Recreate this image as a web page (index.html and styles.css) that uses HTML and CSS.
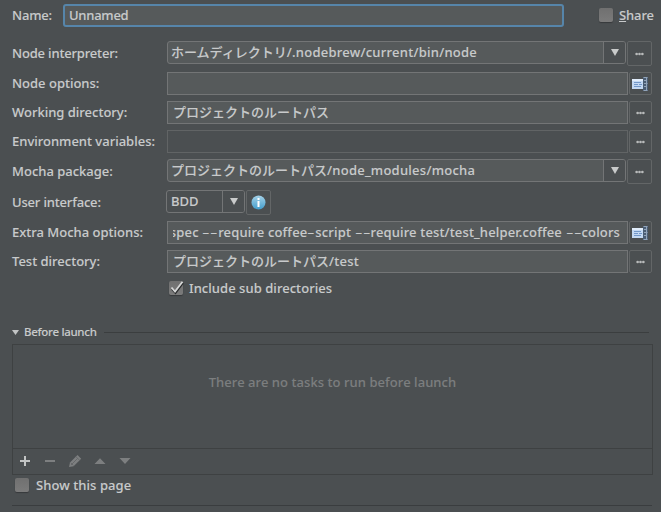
FILE: index.html
```
<!DOCTYPE html>
<html lang="ja">
<head>
<meta charset="utf-8">
<title>Run configuration</title>
<link rel="stylesheet" href="styles.css">
</head>
<body>
<svg class="defs" width="0" height="0">
  <defs>
    <linearGradient id="info" x1="0" y1="0" x2="0" y2="1"><stop offset="0" stop-color="#a5d2e8"/><stop offset="1" stop-color="#429dcc"/></linearGradient>
    <symbol id="dots" viewBox="0 0 10 4"><g fill="#b9bbbc"><circle cx="1.8" cy="2" r="1.45"/><circle cx="5" cy="2" r="1.45"/><circle cx="8.2" cy="2" r="1.45"/></g></symbol>
    <symbol id="down" viewBox="0 0 8 7"><path d="M0 0H8L4 7Z" fill="#c9cbcb"/></symbol>
    <symbol id="expand" viewBox="0 0 16 16">
      <path d="M0 3H11V13H0Z" fill="#c3d8f2"/><path d="M0 3H11V5H0Z" fill="#e1edfb"/>
      <path d="M2 6.5H9M2 8.5H6M7 8.5H10M2 10.5H9" stroke="#7297c8"/>
      <path d="M11 1V15H16V1Z" fill="#4a5d74"/>
      <path d="M11.500 1.500H15.500M12 4.500H15M14.500 2V14M12 7.500H15.500M12 10.500H15M11.500 14.500H15.500" stroke="#91a3b8" fill="none"/>
    </symbol>
  </defs>
</svg>
<main class="dialog">
  <header class="name-row">
    <label class="tight">Name:</label>
    <div class="name-field tighter">Unnamed</div>
    <span class="check"></span>
    <span class="share"><u>S</u>hare</span>
  </header>

  <section class="form">
    <div class="row tall">
      <label class="tight">Node interpreter:</label>
      <div class="combo"><span class="value">ホームディレクトリ<span class="wide">/.nodebrew/current/bin/node</span></span><span class="arrow"><svg><use href="#down"/></svg></span></div>
      <button class="browse big"><svg class="dots"><use href="#dots"/></svg></button>
    </div>
    <div class="row">
      <label>Node options:</label>
      <div class="field"></div>
      <button class="browse"><svg class="expand"><use href="#expand"/></svg></button>
    </div>
    <div class="row">
      <label>Working directory:</label>
      <div class="field"><span class="value">プロジェクトのルートパス</span></div>
      <button class="browse"><svg class="dots"><use href="#dots"/></svg></button>
    </div>
    <div class="row">
      <label>Environment variables:</label>
      <div class="field disabled"></div>
      <button class="browse"><svg class="dots"><use href="#dots"/></svg></button>
    </div>
    <div class="row tall">
      <label>Mocha package:</label>
      <div class="combo"><span class="value">プロジェクトのルートパス<span class="wide">/node_modules/mocha</span></span><span class="arrow"><svg><use href="#down"/></svg></span></div>
      <button class="browse big"><svg class="dots"><use href="#dots"/></svg></button>
    </div>
    <div class="row tall">
      <label class="tight">User interface:</label>
      <div class="combo small"><span class="value">BDD</span><span class="arrow"><svg><use href="#down"/></svg></span></div>
      <button class="browse info"><svg viewBox="0 0 15 15"><circle cx="7.5" cy="7.5" r="7" fill="url(#info)"/><path d="M6.5 3H8.5V5H6.5ZM6.5 6H8.5V12H6.5Z" fill="#fff"/></svg></button>
    </div>
    <div class="row">
      <label>Extra Mocha options:</label>
      <div class="field scrolled"><span class="clip"><span class="value args">spec <b>-</b><b>-</b>require coffee<b>-</b>script <b>-</b><b>-</b>require test/test_helper.coffee <b>-</b><b>-</b>colors</span></span></div>
      <button class="browse"><svg class="expand"><use href="#expand"/></svg></button>
    </div>
    <div class="row">
      <label>Test directory:</label>
      <div class="field"><span class="value">プロジェクトのルートパス<span class="wide">/test</span></span></div>
      <button class="browse"><svg class="dots"><use href="#dots"/></svg></button>
    </div>
    <div class="sub-row">
      <span class="check"><svg viewBox="0 0 15 14"><path d="M3 8L6.5 12L14 2" stroke="#292b2c" stroke-width="2" fill="none"/><path d="M2.5 6.5L6 10.5L13.5 .8" stroke="#d5d6d6" stroke-width="1.8" fill="none"/></svg></span>
      <span class="include">Include sub directories</span>
    </div>
  </section>

  <div class="section-title">
    <svg viewBox="0 0 7 5"><path d="M0 0H7L3.5 5Z" fill="#c2c4c5"/></svg>
    <span class="before">Before launch</span><i></i>
  </div>
  <section class="tasks">
    <div class="empty">There are no tasks to run before launch</div>
    <div class="tools">
      <svg viewBox="0 0 125 24">
        <path d="M7 12H17M12 7V17" stroke="#c2c4c4" stroke-width="2"/>
        <g fill="#7d7f80"><path d="M32 11H42V13H32ZM81.500 15L87 9.300L92.500 15ZM106.500 9H117.500L112 15Z"/>
        <path d="M56 18L57 13.600L64.500 6.100L68.200 9.800L60.600 17.200Z"/></g>
        <path d="M57.800 13.800L60.400 16.400M62.800 7.500L66.800 11.500M58 16L64.500 9.500" stroke="#5c5f60" stroke-width=".7"/>
      </svg>
    </div>
  </section>
  <div class="show-row"><span class="check"></span><span class="show">Show this page</span></div>
  <footer></footer>
</main>
</body>
</html>
```
FILE: styles.css
```
* { box-sizing: border-box; }
body {
  margin: 0;
  background: #4b4f51;
  color: #c8cacb;
  font: 500 13px/20px "Noto Sans", "Noto Sans CJK JP", sans-serif;
  -webkit-text-stroke: .1px currentColor;
  white-space: nowrap;
}
.defs { position: absolute; }
svg { display: block; flex: none; }
.tight { letter-spacing: -.17px; }
.tighter { letter-spacing: -.25px; }
.wide { letter-spacing: .26px; }
.dialog { width: 661px; height: 512px; overflow: hidden; padding: 4px 8px 0 12px; }
.name-row { display: flex; height: 37px; align-items: flex-start; }
.name-row label { flex: none; width: 51px; padding-top: 1px; }
.name-field {
  flex: none; width: 501px; height: 23px; padding: 0 4px;
  border: 2px solid #5685aa; border-radius: 3px;
  background: #565a5b; line-height: 19px;
}
.check {
  display: block; flex: none; width: 14px; height: 14px;
  border-radius: 2px; background: linear-gradient(#707070, #7b7b7b);
  box-shadow: 0 1px 1px #37393b;
}
.name-row .check { margin: 4px 6px 0 35px; }
.share { flex: none; padding: 1px 0 0; letter-spacing: -.1px; }

.row { display: flex; height: 29px; align-items: flex-start; }
.row.tall { height: 31px; }
.row label { width: 155px; padding-top: 1px; }
.row.tall label { padding-top: 2px; }
.field, .combo {
  display: flex; width: 461px; height: 23px;
  border: 1px solid #737576; background: #565a5b; line-height: 21px;
}
.field .value { margin-left: 5px; }
.field.disabled { background: #4b4f51; border-color: #616465; }
.combo { width: 459px; border-radius: 3px; justify-content: space-between; }
.combo .value { margin-left: 3px; }
.arrow {
  width: 22px; border-left: 1px solid #737576; background: #4b4f51;
  display: flex; align-items: center; justify-content: center; border-radius: 0 2px 2px 0;
}
.arrow svg { width: 8px; height: 7px; }
.combo.small { width: 79px; margin-left: -1px; background: #4b4f51; }
.combo.small .value { margin-left: 4px; }
.combo.small .arrow { width: 22px; }
.field.scrolled { padding: 0 7px 0 5px; justify-content: flex-end; }
.clip { display: flex; width: 448px; overflow: hidden; justify-content: flex-end; }
.args { flex: none; letter-spacing: .15px; }
.args b { display: inline-block; width: 8px; text-align: center; font-weight: 400; transform: scaleX(1.8); -webkit-text-stroke: 0; }
.browse {
  display: flex; align-items: center; justify-content: center;
  width: 23px; height: 23px; margin: 0 0 0 1px; padding: 0;
  border: 1px solid #636667; border-radius: 2px; background: #4b4f51;
}
.browse.big, .browse.info { width: 25px; height: 25px; }
.dots { width: 9px; height: 4px; }
.expand { width: 16px; height: 16px; margin-left: -1px; }
.info svg { width: 15px; height: 15px; }
.sub-row { display: flex; padding: 2px 0 0 157px; gap: 6px; height: 43px; }
.sub-row .check svg { width: 15px; height: 14px; }
.include { margin-top: -3px; letter-spacing: .05px; }

.section-title { display: flex; align-items: center; height: 20px; font-size: 12px; }
.section-title svg { width: 7px; height: 5px; margin-right: 5px; }
.section-title i { flex: 1; height: 1px; background: #3b3e3f; margin: 1px 4px 0 7px; }
.section-title .before { font-size: 11.5px; letter-spacing: -.3px; }
.tasks { width: 641px; height: 131px; margin-top: 2px; border: 1px solid #3e4142; }
.empty { height: 104px; border-bottom: 1px solid #3e4142; padding-top: 27px; text-align: center; letter-spacing: .06px; color: #7c7e7f; }
.tools { height: 25px; }
.tools svg { width: 125px; height: 24px; }
.show-row { display: flex; height: 30px; padding: 3px 0 0 3px; gap: 7px; }
.show { margin-top: -3px; letter-spacing: .07px; }
footer { width: 640px; height: 1px; background: #3a3d3f; }
```
